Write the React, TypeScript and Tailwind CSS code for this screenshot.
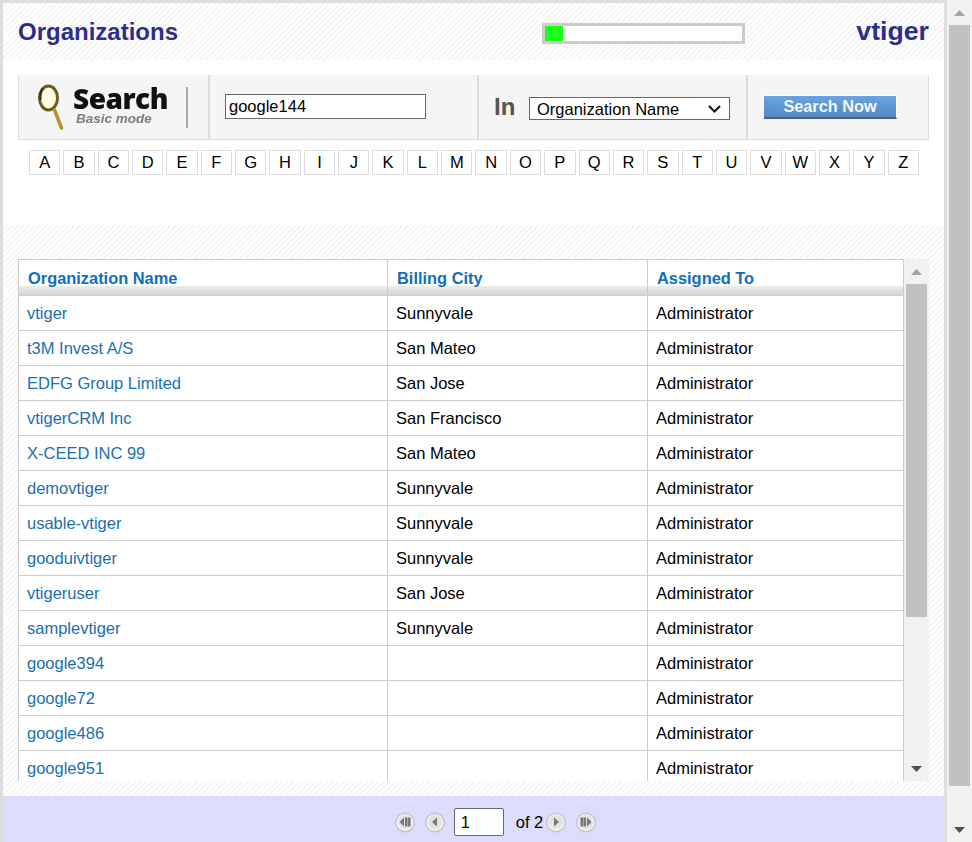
const hatch =
  "bg-[repeating-linear-gradient(135deg,#ffffff_0px,#ffffff_2px,#f5f5f5_2px,#f5f5f5_4px)]";

const letters = "ABCDEFGHIJKLMNOPQRSTUVWXYZ".split("");

const rows = [
  ["vtiger", "Sunnyvale"],
  ["t3M Invest A/S", "San Mateo"],
  ["EDFG Group Limited", "San Jose"],
  ["vtigerCRM Inc", "San Francisco"],
  ["X-CEED INC 99", "San Mateo"],
  ["demovtiger", "Sunnyvale"],
  ["usable-vtiger", "Sunnyvale"],
  ["gooduivtiger", "Sunnyvale"],
  ["vtigeruser", "San Jose"],
  ["samplevtiger", "Sunnyvale"],
  ["google394", ""],
  ["google72", ""],
  ["google486", ""],
  ["google951", ""],
];

function PageBtn({ kind }: { kind: "first" | "prev" | "next" | "last" }) {
  return (
    <svg width="20" height="21" viewBox="0 0 20 21" className="shrink-0">
      <circle cx="10" cy="10.5" r="10" fill="#c6c6c6" />
      <circle cx="10" cy="10.500" r="8.500" fill="#f3f3f3" />
      <circle cx="10" cy="10" r="7" fill="#e2e2e2" />
      {kind === "first" && (
        <>
          <path d="M9 5.500v9L4.500 10z" fill="#777777" />
          <rect x="10" y="5.500" width="2.500" height="9" fill="#777777" />
          <rect x="13" y="5.500" width="2.500" height="9" fill="#777777" />
        </>
      )}
      {kind === "prev" && <path d="M12 5.500v9L7 10z" fill="#777777" />}
      {kind === "next" && <path d="M8 5.500v9l5-4.500z" fill="#777777" />}
      {kind === "last" && (
        <>
          <rect x="4.500" y="5.500" width="2.500" height="9" fill="#777777" />
          <rect x="7.500" y="5.500" width="2.500" height="9" fill="#777777" />
          <path d="M11 5.500v9l4.500-4.500z" fill="#777777" />
        </>
      )}
    </svg>
  );
}

export default function App() {
  return (
    <div className="flex h-[842px] w-[972px] overflow-hidden bg-white font-['Liberation_Sans',Arial,sans-serif] text-[16.5px] text-black">
      {/* Popup body */}
      <div className="flex h-full w-[947px] flex-col border-x-[3px] border-t-[3px] border-[#dddddd] bg-white">
        <header className={`flex h-[57px] shrink-0 items-center justify-between px-[15px] ${hatch}`}>
          <h1 className="w-[524px] text-2xl font-bold text-[#2e2e8a]">Organizations</h1>
          <div className="mt-[4px] mr-auto h-[21px] w-[203px] border-[3px] border-[#cccccc] bg-white">
            <div className="h-full w-[18px] bg-[#19ff19]" />
          </div>
          <span className="text-[26.700px] font-bold text-[#2e2e8a]">vtiger</span>
        </header>

        <section className="flex h-[165px] shrink-0 flex-col px-[15px] pt-[15px]">
          <div className="flex h-[65px] w-[911px] shrink-0 items-stretch border-x border-b border-[#dddddd] bg-[#f5f5f5]">
            <div className="flex w-[191px] shrink-0 items-center border-r-2 border-[#dddddd] pl-[18px]">
              <svg width="28" height="46" viewBox="0 0 28 46" className="shrink-0">
                <ellipse cx="11.500" cy="14" rx="9" ry="12" fill="#fffde0" stroke="#6b5d20" strokeWidth="3" />
                <path d="M6 4.500C3.500 7 3 12 3.500 16" fill="none" stroke="#2e2a14" strokeWidth="2" />
                <path d="M17.500 26l7 18" stroke="#b8932e" strokeWidth="3.500" strokeLinecap="round" />
              </svg>
              <div className="mb-[2px] ml-2 flex w-[95px] shrink-0 flex-col">
                <span className="font-['Open_Sans',sans-serif] text-[28px] leading-[24px] font-extrabold tracking-[-0.5px] text-[#111111] blur-[0.3px]">
                  Search
                </span>
                <span className="mt-[2px] ml-[3px] text-[13.500px] leading-[14px] font-bold text-[#7d7d7d] italic blur-[0.3px]">
                  Basic mode
                </span>
              </div>
              <div className="ml-[18px] h-[41px] w-[2px] bg-[#aaaaaa]" />
            </div>
            <div className="flex w-[269px] shrink-0 items-center border-r-2 border-[#dddddd] pb-[1px] pl-[15px]">
              <input
                readOnly
                value="google144"
                className="h-[25px] w-[201px] border border-[#666666] bg-white px-[3px] text-[16.5px] text-black outline-none"
              />
            </div>
            <div className="flex w-[269px] shrink-0 items-center border-r-2 border-[#dddddd] pl-[15px]">
              <span className="w-[35px] text-2xl font-bold text-[#555555]">In</span>
              <div className="mt-[3px] flex h-[23px] w-[201px] items-center justify-between border border-[#666666] bg-white pt-[1px] pr-[8px] pl-[7px]">
                <span>Organization Name</span>
                <svg width="13" height="8" viewBox="0 0 13 8">
                  <path d="M1 1l5.500 5.500L12 1" fill="none" stroke="#111111" strokeWidth="2" />
                </svg>
              </div>
            </div>
            <div className="flex flex-1 items-center pb-[1px] pl-[16px]">
              <button className="h-[24px] w-[133px] border-t border-r border-b-2 border-t-white border-r-white border-b-[#555f70] bg-gradient-to-b from-[#6aa3e2] to-[#528ac6] text-[16.300px] leading-[20px] font-bold text-[#f4f8fd]">
                Search Now
              </button>
            </div>
          </div>
          <div className="mt-[10px] ml-[11px] flex w-[890px] gap-[3px]">
            {letters.map((l) => (
              <div
                key={l}
                className="flex h-[25px] w-[31.350px] min-w-0 shrink-0 items-center justify-center border border-[#dddddd] bg-white"
              >
                {l}
              </div>
            ))}
          </div>
        </section>

        <section className={`flex h-[571px] shrink-0 flex-col px-[15px] pt-[34px] ${hatch}`}>
          <div className="flex h-[522px] w-[911px] overflow-hidden">
            <div className="flex w-[886px] shrink-0 flex-col border-x border-t border-[#cccccc] bg-white">
              <div className="flex h-[36px] shrink-0 bg-[linear-gradient(to_bottom,#ffffff_0px,#ffffff_26px,#ecece8_26px,#d8d8d4_34px,#cccccc_36px)] text-[16.4px] font-bold text-[#0f70b7]">
                <div className="w-[369px] border-r border-[#cccccc] pt-[6px] pl-[9px]">Organization Name</div>
                <div className="w-[260px] border-r border-[#cccccc] pt-[6px] pl-[9px]">Billing City</div>
                <div className="flex-1 pt-[6px] pl-[9px]">Assigned To</div>
              </div>
              {rows.map(([name, city]) => (
                <div key={name} className="flex h-[35px] shrink-0 border-b border-[#cccccc]">
                  <div className="flex w-[369px] items-center border-r border-[#cccccc] pt-[1px] pl-[8px] text-[#1a6fb0]">{name}</div>
                  <div className="flex w-[260px] items-center border-r border-[#cccccc] pt-[1px] pl-[8px]">{city}</div>
                  <div className="flex flex-1 items-center pt-[1px] pl-[8px]">Administrator</div>
                </div>
              ))}
            </div>
            <div className="flex w-[25px] shrink-0 flex-col items-center bg-[#f1f1f1]">
              <div className="flex h-[25px] shrink-0 items-center justify-center">
                <svg width="11" height="6" viewBox="0 0 11 6"><path d="M5.500 0L11 6H0z" fill="#a3a3a3" /></svg>
              </div>
              <div className="h-[333px] w-[21px] bg-[#c1c1c1]" />
              <div className="mt-auto flex h-[25px] shrink-0 items-center justify-center">
                <svg width="11" height="6" viewBox="0 0 11 6"><path d="M0 0h11L5.500 6z" fill="#505050" /></svg>
              </div>
            </div>
          </div>
        </section>

        <footer className="flex flex-1 items-center justify-center gap-[10px] bg-[#dcdcfd] pt-[6px] pl-[44px]">
          <PageBtn kind="first" />
          <PageBtn kind="prev" />
          <input
            readOnly
            value="1"
            className="-ml-[1px] h-[28px] w-[50px] rounded-[2px] border border-[#666666] bg-white px-[6px] text-[16.5px] text-black outline-none"
          />
          <span className="ml-[2px] -mr-[7px]">of 2</span>
          <PageBtn kind="next" />
          <PageBtn kind="last" />
        </footer>
      </div>

      {/* Window scrollbar */}
      <div className="flex h-full w-[25px] flex-col items-center bg-[#f1f1f1]">
        <div className="flex h-[25px] shrink-0 items-center justify-center">
          <svg width="11" height="6" viewBox="0 0 11 6"><path d="M5.500 0L11 6H0z" fill="#a3a3a3" /></svg>
        </div>
        <div className="ml-[-1px] h-[761px] w-[21px] bg-[#c1c1c1]" />
        <div className="mt-auto flex h-[25px] shrink-0 items-center justify-center">
          <svg width="11" height="6" viewBox="0 0 11 6"><path d="M0 0h11L5.500 6z" fill="#505050" /></svg>
        </div>
      </div>
    </div>
  );
}
